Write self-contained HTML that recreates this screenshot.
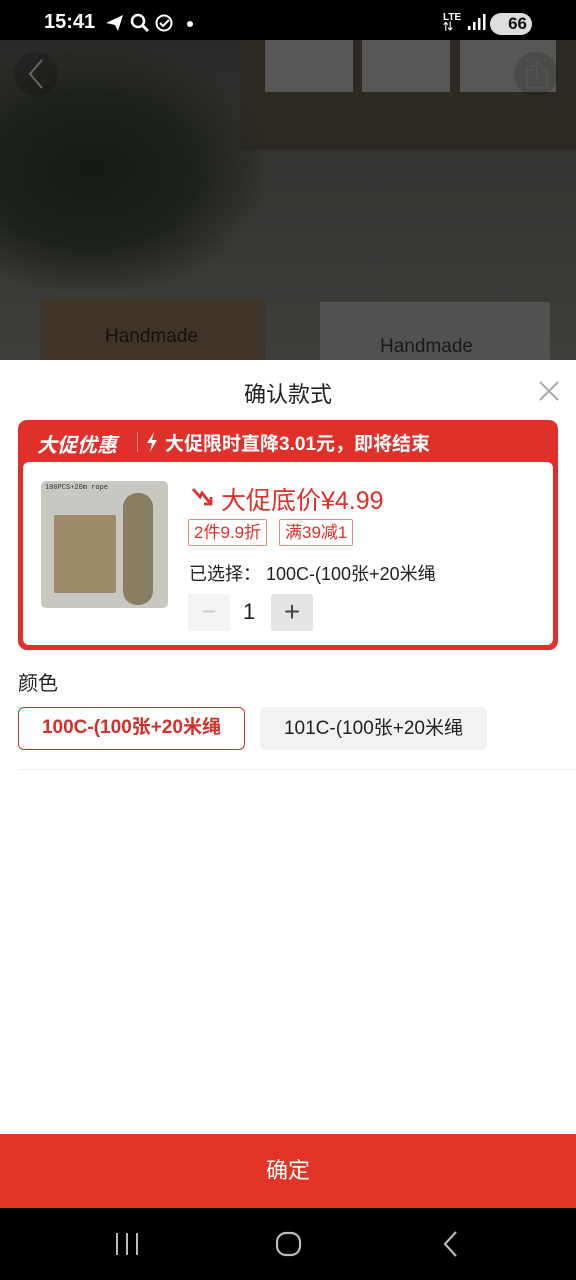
<!DOCTYPE html>
<html><head><meta charset="utf-8"><style>
*{margin:0;padding:0;box-sizing:border-box}
body{width:576px;height:1280px;position:relative;overflow:hidden;background:#fff;font-family:"Liberation Sans","Noto Sans CJK SC",sans-serif}
.abs{position:absolute}
</style></head><body>
<div class="abs" style="left:0;top:0;width:576px;height:360px;background:linear-gradient(180deg,#262624 0%,#333230 40%,#3f3e3b 100%)"></div>
<div class="abs" style="left:240px;top:40px;width:336px;height:110px;background:#2d2a23"></div>
<div class="abs" style="left:265px;top:40px;width:88px;height:52px;background:#575755"></div>
<div class="abs" style="left:362px;top:40px;width:88px;height:52px;background:#575755"></div>
<div class="abs" style="left:460px;top:40px;width:96px;height:52px;background:#575755"></div>
<div class="abs" style="left:0;top:50px;width:260px;height:240px;background:radial-gradient(ellipse at 35% 50%,#161a15 0%,#1e221c 45%,rgba(40,40,38,0) 75%)"></div>
<div class="abs" style="left:40px;top:298px;width:225px;height:62px;background:#3e3427"></div>
<div class="abs" style="left:320px;top:302px;width:230px;height:58px;background:#515150"></div>
<div class="abs" style="left:105px;top:326px;color:#15120e;font-size:19px">Handmade</div>
<div class="abs" style="left:380px;top:336px;color:#1a1a1a;font-size:19px">Handmade</div>
<div class="abs" style="left:14px;top:52px;width:44px;height:44px;border-radius:50%;background:rgba(0,0,0,.15)"></div>
<svg class="abs" style="left:24px;top:58px" width="24" height="32"><path d="M18 2 L6 16 L18 30" stroke="#666" stroke-width="2" fill="none"/></svg>
<div class="abs" style="left:514px;top:52px;width:44px;height:44px;border-radius:50%;background:rgba(0,0,0,.15)"></div>
<svg class="abs" style="left:524px;top:60px" width="26" height="30"><path d="M9 10 H3 V28 H23 V10 H17 M13 20 V2 M8 7 L13 2 L18 7" stroke="#555" stroke-width="1.6" fill="none"/></svg>
<div class="abs" style="left:0;top:0;width:576px;height:40px;background:#000"></div>
<div class="abs" style="left:44px;top:11px;color:#fff;font-size:20px;font-weight:bold">15:41</div>
<svg class="abs" style="left:104px;top:12px" width="90" height="22"><path d="M2 11 L19 3 L14 19 L11 13 Z" fill="#fff"/><circle cx="34" cy="9" r="6" stroke="#fff" stroke-width="2.5" fill="none"/><path d="M38 13 L44 19" stroke="#fff" stroke-width="3"/><circle cx="60" cy="11" r="7.5" stroke="#fff" stroke-width="2" fill="none"/><path d="M56 11 L59 14 L65 8" stroke="#fff" stroke-width="2" fill="none"/><circle cx="86" cy="12" r="3" fill="#fff"/></svg>
<div class="abs" style="left:443px;top:13px;color:#fff;font-size:10px;font-weight:bold;line-height:10px">LTE<br>⇅</div>
<svg class="abs" style="left:466px;top:14px" width="20" height="18"><rect x="2" y="12" width="2.5" height="4" fill="#fff"/><rect x="7" y="8" width="2.5" height="8" fill="#fff"/><rect x="12" y="4" width="2.5" height="12" fill="#fff"/><rect x="17" y="0" width="2.5" height="16" fill="#fff"/></svg>
<div class="abs" style="left:490px;top:13px;width:42px;height:22px;border-radius:11px;background:#ddd;color:#111;font-size:17px;font-weight:bold;text-align:right;padding-right:5px;line-height:22px">66</div>
<div class="abs" style="left:0;top:360px;width:576px;height:848px;background:#fff"></div>
<div class="abs" style="left:0;top:377px;width:576px;text-align:center;font-size:22px;color:#222">确认款式</div>
<svg class="abs" style="left:538px;top:380px" width="22" height="22"><path d="M2 2 L20 20 M20 2 L2 20" stroke="#aaa" stroke-width="2"/></svg>
<div class="abs" style="left:18px;top:420px;width:540px;height:230px;background:#e0302a;border-radius:9px"></div>
<div class="abs" style="left:37px;top:429px;color:#fff;font-size:20px;font-weight:bold;font-style:italic">大促优惠</div>
<div class="abs" style="left:137px;top:432px;width:1px;height:20px;background:rgba(255,255,255,.5)"></div>
<svg class="abs" style="left:145px;top:431px" width="14" height="22"><path d="M9 1 L2 12 H7 L5 21 L12 9 H7 Z" fill="#fff"/></svg>
<div class="abs" style="left:165px;top:429px;color:#fff;font-size:19px;font-weight:bold">大促限时直降3.01元，即将结束</div>
<div class="abs" style="left:23px;top:462px;width:530px;height:183px;background:#fff;border-radius:6px"></div>
<div class="abs" style="left:41px;top:481px;width:127px;height:127px;background:#c9c7c2;border-radius:5px;overflow:hidden">
<div class="abs" style="left:4px;top:3px;font-size:7px;color:#333;font-family:'Liberation Mono',monospace">100PCS+20m rope</div>
<div class="abs" style="left:13px;top:34px;width:62px;height:78px;background:#9c8a68;border-radius:2px"></div>
<div class="abs" style="left:82px;top:12px;width:30px;height:112px;background:#8a7d62;border-radius:14px"></div>
</div>
<svg class="abs" style="left:190px;top:485px" width="24" height="24"><path d="M3 4 L10 12 L12 8 L20 18" stroke="#e0302a" stroke-width="2.8" fill="none"/><path d="M14 19 H21 V12" stroke="#e0302a" stroke-width="2.8" fill="none"/></svg>
<div class="abs" style="left:221px;top:481px;color:#e0302a;font-size:25px">大促底价¥4.99</div>
<div class="abs" style="left:188px;top:519px;height:27px;padding:0 5px;border:1px solid #e58a86;color:#e0302a;font-size:17px;line-height:25px;border-radius:2px">2件9.9折</div>
<div class="abs" style="left:279px;top:519px;height:27px;padding:0 5px;border:1px solid #e58a86;color:#e0302a;font-size:17px;line-height:25px;border-radius:2px">满39减1</div>
<div class="abs" style="left:189px;top:560px;color:#222;font-size:18px">已选择：&nbsp;100C-(100张+20米绳</div>
<div class="abs" style="left:188px;top:594px;width:42px;height:37px;background:#f4f4f4;border-radius:2px;color:#ccc;text-align:center;font-size:26px;line-height:34px">−</div>
<div class="abs" style="left:243px;top:599px;color:#222;font-size:22px">1</div>
<div class="abs" style="left:271px;top:594px;width:42px;height:37px;background:#e4e4e4;border-radius:2px;color:#444;text-align:center;font-size:28px;line-height:35px">+</div>
<div class="abs" style="left:18px;top:667px;color:#222;font-size:20px">颜色</div>
<div class="abs" style="left:18px;top:707px;width:227px;height:43px;border:1.5px solid #c9312b;border-radius:6px;color:#d3302a;font-size:19px;font-weight:bold;text-align:center;line-height:40px">100C-(100张+20米绳</div>
<div class="abs" style="left:260px;top:707px;width:227px;height:43px;background:#f2f2f2;border-radius:6px;color:#222;font-size:19px;text-align:center;line-height:43px">101C-(100张+20米绳</div>
<div class="abs" style="left:18px;top:769px;width:558px;height:1px;background:#eee"></div>
<div class="abs" style="left:0;top:1134px;width:576px;height:74px;background:#e13427;color:#fff;font-size:22px;text-align:center;line-height:74px">确定</div>
<div class="abs" style="left:0;top:1208px;width:576px;height:72px;background:#000"></div>
<svg class="abs" style="left:110px;top:1228px" width="360" height="32"><path d="M7 5 V27 M17 5 V27 M27 5 V27" stroke="#bbb" stroke-width="2"/><rect x="167" y="5" width="23" height="22" rx="9" stroke="#bbb" stroke-width="2.2" fill="none"/><path d="M346 4 L335 16 L346 28" stroke="#bbb" stroke-width="2.2" fill="none"/></svg>
</body></html>
